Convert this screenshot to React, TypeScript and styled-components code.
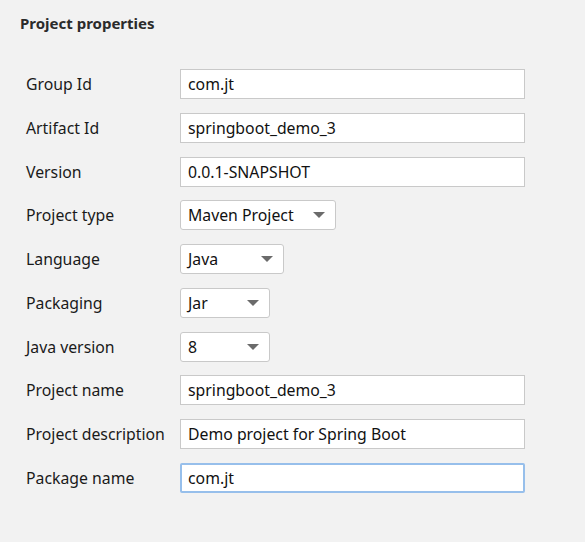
import styled, { createGlobalStyle } from 'styled-components';

const Global = createGlobalStyle`
    html, body {
        margin: 0;
        padding: 0;
        background: #f2f2f2;
    }
    body {
        font-family: "Noto Sans", "Open Sans", sans-serif;
        color: #1a1a1a;
    }
`

// Style

const Page = styled.div`
    width: 585px;
    height: 542px;
    box-sizing: border-box;
    padding: 13px 0 0 20px;
`

const Title = styled.h2`
    margin: 0;
    font-size: 15px;
    font-weight: 700;
    color: #2b2b2b;
    line-height: 20px;
`

const Form = styled.div`
    display: grid;
    grid-template-columns: 154px 345px;
    grid-auto-rows: 30px;
    row-gap: 13.78px;
    margin-top: 36px;
    padding-left: 6px;
    align-items: center;
`

const Label = styled.label`
    font-size: 15.8px;
    line-height: 30px;
    color: #1a1a1a;
`

const TextBox = styled.div<{ $focused?: boolean }>`
    box-sizing: border-box;
    height: 30px;
    width: 345px;
    background: #fff;
    border: ${p => p.$focused ? '2px solid #97bfeb' : '1px solid #c9c9c9'};
    border-radius: ${p => p.$focused ? '2px' : '0'};
    padding-left: ${p => p.$focused ? '6px' : '7px'};
    font-size: 15.8px;
    line-height: ${p => p.$focused ? '26px' : '28px'};
    color: #111;
    white-space: nowrap;
`

const Select = styled.div<{ $width: number }>`
    box-sizing: border-box;
    height: 30px;
    width: ${p => p.$width}px;
    background: #fff;
    border: 1px solid #c9c9c9;
    border-radius: 3px;
    padding: 0 10px 0 7px;
    display: flex;
    align-items: center;
    justify-content: space-between;
    font-size: 15.8px;
    color: #111;
`

const Arrow = styled.span`
    width: 0;
    height: 0;
    border-left: 6px solid transparent;
    border-right: 6px solid transparent;
    border-top: 6px solid #6b6b6b;
`

// Component

type Row =
    | { label: string; kind: 'text'; value: string; focused?: boolean }
    | { label: string; kind: 'select'; value: string; width: number };

const rows: Row[] = [
    { label: 'Group Id', kind: 'text', value: 'com.jt' },
    { label: 'Artifact Id', kind: 'text', value: 'springboot_demo_3' },
    { label: 'Version', kind: 'text', value: '0.0.1-SNAPSHOT' },
    { label: 'Project type', kind: 'select', value: 'Maven Project', width: 156 },
    { label: 'Language', kind: 'select', value: 'Java', width: 104 },
    { label: 'Packaging', kind: 'select', value: 'Jar', width: 90 },
    { label: 'Java version', kind: 'select', value: '8', width: 90 },
    { label: 'Project name', kind: 'text', value: 'springboot_demo_3' },
    { label: 'Project description', kind: 'text', value: 'Demo project for Spring Boot' },
    { label: 'Package name', kind: 'text', value: 'com.jt', focused: true },
];

const App = () => {
    return (
        <Page>
            <Global />
            <Title>Project properties</Title>
            <Form>
                {rows.map(row => [
                    <Label key={row.label + '-l'}>{row.label}</Label>,
                    row.kind === 'text'
                        ? <TextBox key={row.label} $focused={row.focused}>{row.value}</TextBox>
                        : <Select key={row.label} $width={row.width}>{row.value}<Arrow /></Select>
                ])}
            </Form>
        </Page>
    )
}
export default App;
